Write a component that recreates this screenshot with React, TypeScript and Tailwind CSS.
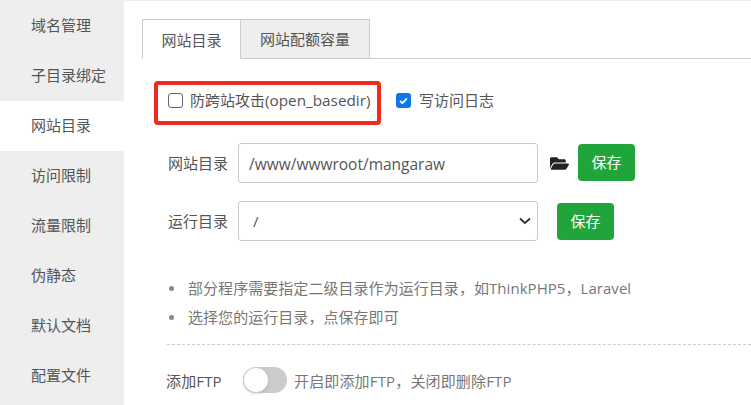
import React from 'react';
import { FaFolderOpen } from 'react-icons/fa';

const menu = ['域名管理', '子目录绑定', '网站目录', '访问限制', '流量限制', '伪静态', '默认文档', '配置文件'];
const font = 'font-["Open_Sans","Noto_Sans_CJK_SC",sans-serif]';

const SaveButton = ({ className }: { className: string }) => (
  <button className={`w-[57px] h-[37px] bg-[#20a53a] rounded-[4px] text-white text-[15px] ${className}`}>保存</button>
);

export default function App() {
  return (
    <div className={`${font} w-[751px] h-[405px] overflow-hidden bg-white text-[#555] text-[15px] border-t border-[#eee] flex`}>
      <div className="w-[124px] h-[404px] shrink-0 bg-[#eee]">
        {menu.map(item => (
          <div key={item} className={`h-[50px] leading-[48px] pl-[31px] ${item === '网站目录' ? 'bg-white' : ''}`}>{item}</div>
        ))}
      </div>

      <div className="flex-1 relative pt-[18px]">
        <div className="ml-[18px] flex h-[40px] border-b border-[#ccc]">
          <div className="w-[99px] h-[40px] border border-[#ccc] border-b-white bg-white text-center leading-[40px]">网站目录</div>
          <div className="w-[129px] h-[40px] border border-l-0 border-[#ccc] bg-[#eee] text-center leading-[38px]">网站配额容量</div>
        </div>

        {/* red annotation round the first checkbox */}
        <div className="absolute left-[30px] top-[80px] w-[227px] h-[44px] border-[4px] border-[#ee2a1f] rounded-[4px]"></div>

        <div className="ml-[44px] mt-[33px] h-[16px] flex items-center">
          <span className="w-[15px] h-[15px] border border-[#666] rounded-[3px] bg-white"></span>
          <span className="ml-[7px] w-[206px] whitespace-nowrap">
            防跨站攻击<span className="text-[15.3px]">(open_basedir)</span>
          </span>
          <span className="w-[15px] h-[15px] rounded-[3px] bg-[#0d75f0] flex items-center justify-center">
            <svg width="11" height="11" viewBox="0 0 16 16">
              <path d="M3 8.5l3.3 3.3L13 4.8" fill="none" stroke="white" strokeWidth="2.6" />
            </svg>
          </span>
          <span className="ml-[8px] whitespace-nowrap">写访问日志</span>
        </div>

        <div className="ml-[44px] mt-[35px] flex items-center h-[40px]">
          <span className="w-[70px] shrink-0">网站目录</span>
          <div className="w-[300px] h-[40px] border border-[#ccc] rounded-[3px] pl-[10px] leading-[40px] text-[15.5px]">/www/wwwroot/mangaraw</div>
          <FaFolderOpen className="ml-[12px] text-[#222] w-[19px] h-[17px]" />
          <SaveButton className="ml-[9px] -mt-[2px]" />
        </div>

        <div className="ml-[44px] mt-[18px] flex items-center h-[40px]">
          <span className="w-[70px] shrink-0">运行目录</span>
          <div className="w-[300px] h-[40px] border border-[#ccc] rounded-[3px] pl-[14px] pr-[6px] leading-[38px] flex items-center justify-between">
            <span>/</span>
            <svg width="12" height="8" viewBox="0 0 12 8">
              <path d="M1 1.5l5 4.5 5-4.5" fill="none" stroke="#333" strokeWidth="1.8" />
            </svg>
          </div>
          <SaveButton className="ml-[19px] mt-[1px]" />
        </div>

        <ul className="ml-[45px] mt-[33px] text-[#777] tracking-[0.05px]">
          {['部分程序需要指定二级目录作为运行目录，如ThinkPHP5，Laravel', '选择您的运行目录，点保存即可'].map(t => (
            <li key={t} className="h-[29px] leading-[29px] flex items-center">
              <span className="w-[5px] h-[5px] rounded-full bg-[#888] mr-[14px]"></span>
              {t}
            </li>
          ))}
        </ul>

        <div className="ml-[43px] mt-[12px] border-t border-dashed border-[#ccc]"></div>

        <div className="ml-[42px] mt-[22px] flex items-center h-[26px]">
          <span className="w-[77px] shrink-0 pt-[2px] tracking-[0.15px]">添加FTP</span>
          <span className="w-[44px] h-[26px] rounded-full bg-[#ccc] relative shrink-0">
            <span className="absolute left-0 top-0 w-[26px] h-[26px] rounded-full bg-white border border-[#ccc] shadow-sm"></span>
          </span>
          <span className="ml-[7px] pt-[2px] text-[#777] whitespace-nowrap tracking-[0.15px]">开启即添加FTP，关闭即删除FTP</span>
        </div>
      </div>
    </div>
  );
}
